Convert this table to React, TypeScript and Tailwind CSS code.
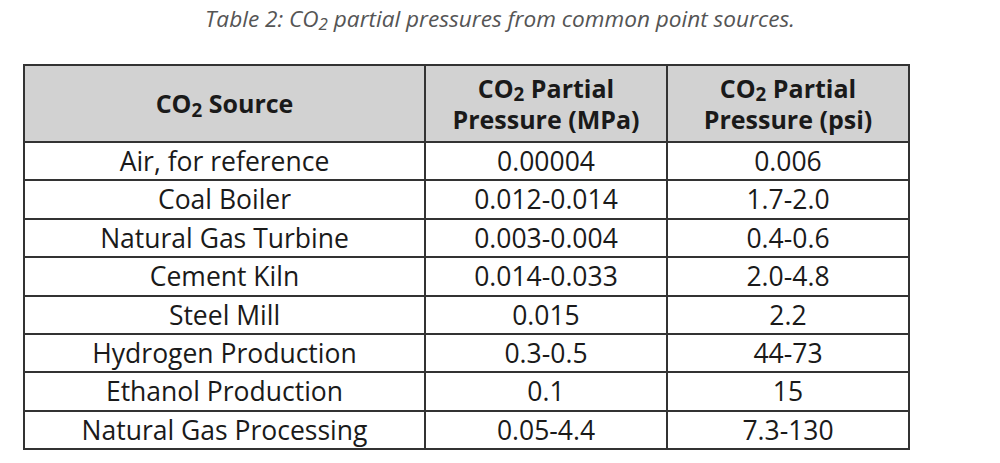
const rows: Array<[string, string, string]> = [
  ['Air, for reference', '0.00004', '0.006'],
  ['Coal Boiler', '0.012-0.014', '1.7-2.0'],
  ['Natural Gas Turbine', '0.003-0.004', '0.4-0.6'],
  ['Cement Kiln', '0.014-0.033', '2.0-4.8'],
  ['Steel Mill', '0.015', '2.2'],
  ['Hydrogen Production', '0.3-0.5', '44-73'],
  ['Ethanol Production', '0.1', '15'],
  ['Natural Gas Processing', '0.05-4.4', '7.3-130'],
];

const CO2 = () => (
  <>
    CO<sub className="bottom-[-0.2em]">2</sub>
  </>
);

export default function App() {
  return (
    <div className="w-[1000px] h-[463px] bg-white font-['Open_Sans',sans-serif] text-[#1a1a1a] overflow-hidden">
      <p className="pt-[8px] h-[64px] text-center italic text-[22.6px] leading-[22px] text-[#555]">
        Table 2: <CO2 /> partial pressures from common point sources.
      </p>
      <table className="ml-[23px] w-[887px] border-collapse text-[26.5px] text-center">
        <thead>
          <tr className="h-[77px] bg-[#d2d2d2] text-[25px]">
            <th className="w-[401px] border-2 border-[#333] font-bold">
              <CO2 /> Source
            </th>
            <th className="w-[242px] border-2 border-[#333] font-bold leading-[31px]">
              <CO2 /> Partial
              <br />
              Pressure (MPa)
            </th>
            <th className="border-2 border-[#333] font-bold leading-[31px]">
              <CO2 /> Partial
              <br />
              Pressure (psi)
            </th>
          </tr>
        </thead>
        <tbody>
          {rows.map(([source, mpa, psi]) => (
            <tr key={source} className="h-[38.4px]">
              <td className="border-2 border-[#333] leading-none">{source}</td>
              <td className="border-2 border-[#333] leading-none">{mpa}</td>
              <td className="border-2 border-[#333] leading-none">{psi}</td>
            </tr>
          ))}
        </tbody>
      </table>
    </div>
  );
}
